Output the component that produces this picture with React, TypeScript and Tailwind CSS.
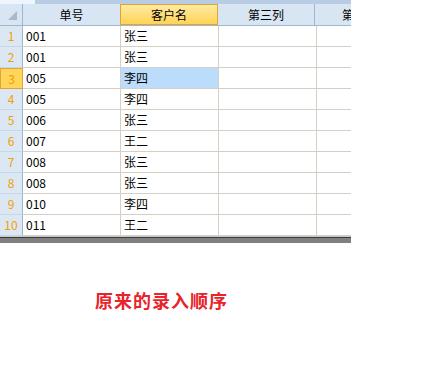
import React from "react";

const rows: [string, string][] = [
  ["001", "张三"],
  ["001", "张三"],
  ["005", "李四"],
  ["005", "李四"],
  ["006", "张三"],
  ["007", "王二"],
  ["008", "张三"],
  ["008", "张三"],
  ["010", "李四"],
  ["011", "王二"],
];

const font = { fontFamily: '"Noto Sans CJK SC", "Liberation Sans", sans-serif' };

export default function App() {
  return (
    <div className="w-[424px] h-[373px] bg-white relative overflow-hidden" style={font}>
      <div className="w-[351px] flex flex-col">
        <div className="flex h-[4px]">
          <div className="w-[35px] bg-[#eef5fd]" />
          <div className="flex-1 bg-[#b8cce4]" />
        </div>
        <div className="flex h-[22px] bg-[#d8e5f3] border-b border-[#9eb6ce] text-[12px] text-black">
          <div className="w-[23px] shrink-0 border-r border-[#9eb6ce] relative">
            <div className="absolute right-[5px] bottom-[5px] w-0 h-0 border-l-[9px] border-l-transparent border-b-[9px] border-b-[#a9b8cc]" />
          </div>
          <div className="w-[98px] shrink-0 border-r border-[#9eb6ce] flex items-center justify-center">单号</div>
          <div className="w-[98px] shrink-0 border border-[#e3a33b] bg-gradient-to-b from-[#ffeaa0] to-[#ffd452] flex items-center justify-center -ml-px">客户名</div>
          <div className="w-[97px] shrink-0 border-r border-[#9eb6ce] flex items-center justify-center">第三列</div>
          <div className="flex-1 flex items-center pl-[27px] overflow-hidden whitespace-nowrap">第</div>
        </div>
        {rows.map((r, i) => {
          const sel = i === 2;
          return (
            <div key={i} className="flex h-[21px] text-[12px] text-black">
              <div
                className={
                  sel
                    ? "w-[23px] shrink-0 bg-[#ffd55a] border border-[#e3a33b] text-[#f29d00] flex items-center justify-center"
                    : "w-[23px] shrink-0 bg-[#dce7f4] border-r border-b border-r-[#9eb6ce] border-b-[#c7d6e8] text-[#f2a000] flex items-center justify-center"
                }
              >
                {i + 1}
              </div>
              <div className="w-[98px] shrink-0 border-r border-b border-[#d4d0c8] flex items-center pl-[3px]">{r[0]}</div>
              <div
                className={
                  sel
                    ? "w-[98px] shrink-0 border-r border-b border-[#d4d0c8] bg-[#bcdcfc] flex items-center pl-[3px]"
                    : "w-[98px] shrink-0 border-r border-b border-[#d4d0c8] flex items-center pl-[3px]"
                }
              >
                {r[1]}
              </div>
              <div className="w-[98px] shrink-0 border-r border-b border-[#d4d0c8]" />
              <div className="flex-1 border-b border-[#d4d0c8]" />
            </div>
          );
        })}
        <div className="h-px bg-[#c8c8c8]" />
        <div className="h-px bg-[#3c3c3c]" />
        <div className="h-[5px] bg-[#808080]" />
      </div>
      <div className="absolute left-[95px] top-[288px] text-[18px] font-bold text-[#e8232a] leading-[24px] tracking-[1px]">
        原来的录入顺序
      </div>
    </div>
  );
}
